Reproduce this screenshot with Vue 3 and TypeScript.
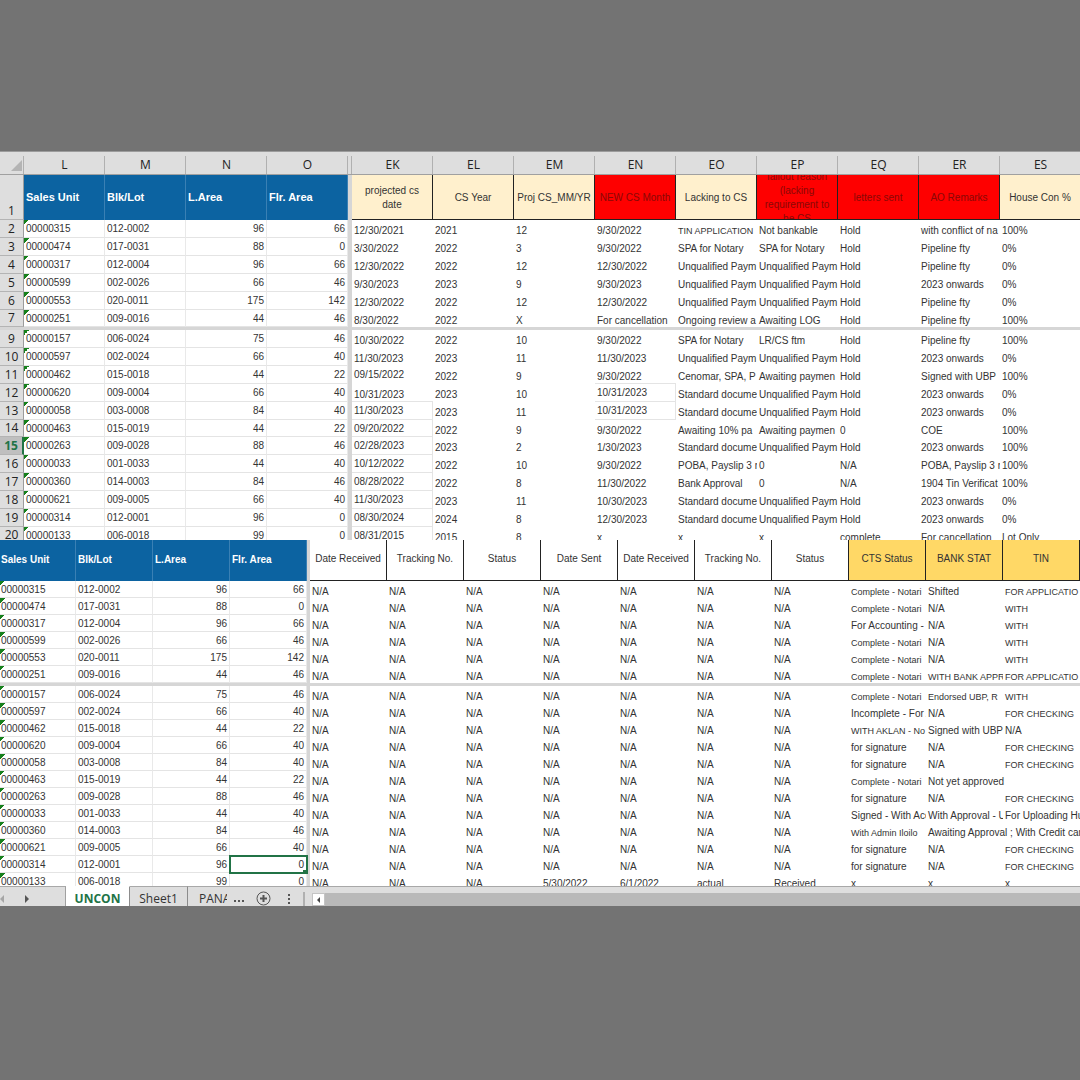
<script setup lang="ts">
interface Unit {
  row: number
  code: string
  lot: string
  land: number
  floor: number
}

interface Head {
  letter?: string
  label: string
  tone: string
}

const units: Unit[] = [
  { row: 2, code: '00000315', lot: '012-0002', land: 96, floor: 66 },
  { row: 3, code: '00000474', lot: '017-0031', land: 88, floor: 0 },
  { row: 4, code: '00000317', lot: '012-0004', land: 96, floor: 66 },
  { row: 5, code: '00000599', lot: '002-0026', land: 66, floor: 46 },
  { row: 6, code: '00000553', lot: '020-0011', land: 175, floor: 142 },
  { row: 7, code: '00000251', lot: '009-0016', land: 44, floor: 46 },
  { row: 9, code: '00000157', lot: '006-0024', land: 75, floor: 46 },
  { row: 10, code: '00000597', lot: '002-0024', land: 66, floor: 40 },
  { row: 11, code: '00000462', lot: '015-0018', land: 44, floor: 22 },
  { row: 12, code: '00000620', lot: '009-0004', land: 66, floor: 40 },
  { row: 13, code: '00000058', lot: '003-0008', land: 84, floor: 40 },
  { row: 14, code: '00000463', lot: '015-0019', land: 44, floor: 22 },
  { row: 15, code: '00000263', lot: '009-0028', land: 88, floor: 46 },
  { row: 16, code: '00000033', lot: '001-0033', land: 44, floor: 40 },
  { row: 17, code: '00000360', lot: '014-0003', land: 84, floor: 46 },
  { row: 18, code: '00000621', lot: '009-0005', land: 66, floor: 40 },
  { row: 19, code: '00000314', lot: '012-0001', land: 96, floor: 0 },
  { row: 20, code: '00000133', lot: '006-0018', land: 99, floor: 0 },
]

const unitHeads = [
  { letter: 'L', label: 'Sales Unit' },
  { letter: 'M', label: 'Blk/Lot' },
  { letter: 'N', label: 'L.Area' },
  { letter: 'O', label: 'Flr. Area' },
]

const csHeads: Head[] = [
  { letter: 'EK', label: 'projected cs\ndate', tone: 'cream' },
  { letter: 'EL', label: 'CS Year', tone: 'cream' },
  { letter: 'EM', label: 'Proj CS_MM/YR', tone: 'cream' },
  { letter: 'EN', label: 'NEW CS Month', tone: 'red' },
  { letter: 'EO', label: 'Lacking to CS', tone: 'cream' },
  { letter: 'EP', label: 'fallout reason\n(lacking\nrequirement to\nbe CS', tone: 'red' },
  { letter: 'EQ', label: 'letters sent', tone: 'red' },
  { letter: 'ER', label: 'AO Remarks', tone: 'red' },
  { letter: 'ES', label: 'House Con %', tone: 'cream' },
]

const UP = 'Unqualified Paym'
const SD = 'Standard docume'
const csRows: string[][] = [
  ['12/30/2021', '2021', '12', '9/30/2022', 'TIN APPLICATION', 'Not bankable', 'Hold', 'with conflict of na', '100%'],
  ['3/30/2022', '2022', '3', '9/30/2022', 'SPA for Notary', 'SPA for Notary', 'Hold', 'Pipeline fty', '0%'],
  ['12/30/2022', '2022', '12', '12/30/2022', UP, UP, 'Hold', 'Pipeline fty', '0%'],
  ['9/30/2023', '2023', '9', '9/30/2023', UP, UP, 'Hold', '2023 onwards', '0%'],
  ['12/30/2022', '2022', '12', '12/30/2022', UP, UP, 'Hold', 'Pipeline fty', '0%'],
  ['8/30/2022', '2022', 'X', 'For cancellation', 'Ongoing review a', 'Awaiting LOG', 'Hold', 'Pipeline fty', '100%'],
  ['10/30/2022', '2022', '10', '9/30/2022', 'SPA for Notary', 'LR/CS ftm', 'Hold', 'Pipeline fty', '100%'],
  ['11/30/2023', '2023', '11', '11/30/2023', UP, UP, 'Hold', '2023 onwards', '0%'],
  ['09/15/2022', '2022', '9', '9/30/2022', 'Cenomar, SPA, P', 'Awaiting paymen', 'Hold', 'Signed with UBP', '100%'],
  ['10/31/2023', '2023', '10', '10/31/2023', SD, UP, 'Hold', '2023 onwards', '0%'],
  ['11/30/2023', '2023', '11', '10/31/2023', SD, UP, 'Hold', '2023 onwards', '0%'],
  ['09/20/2022', '2022', '9', '9/30/2022', 'Awaiting 10% pa', 'Awaiting paymen', '0', 'COE', '100%'],
  ['02/28/2023', '2023', '2', '1/30/2023', SD, UP, 'Hold', '2023 onwards', '100%'],
  ['10/12/2022', '2022', '10', '9/30/2022', 'POBA, Payslip 3 m', '0', 'N/A', 'POBA, Payslip 3 m', '100%'],
  ['08/28/2022', '2022', '8', '11/30/2022', 'Bank Approval', '0', 'N/A', '1904 Tin Verificat', '100%'],
  ['11/30/2023', '2023', '11', '10/30/2023', SD, UP, 'Hold', '2023 onwards', '0%'],
  ['08/30/2024', '2024', '8', '12/30/2023', SD, UP, 'Hold', '2023 onwards', '0%'],
  ['08/31/2015', '2015', '8', 'x', 'x', 'x', 'complete', 'For cancellation', 'Lot Only'],
]

const docHeads: Head[] = [
  { label: 'Date Received', tone: 'plain' },
  { label: 'Tracking No.', tone: 'plain' },
  { label: 'Status', tone: 'plain' },
  { label: 'Date Sent', tone: 'plain' },
  { label: 'Date Received', tone: 'plain' },
  { label: 'Tracking No.', tone: 'plain' },
  { label: 'Status', tone: 'plain' },
  { label: 'CTS Status', tone: 'gold' },
  { label: 'BANK STAT', tone: 'gold' },
  { label: 'TIN', tone: 'gold' },
]

const CN = 'Complete - Notari'
const FC = 'FOR CHECKING'
const FS = 'for signature'
const FA = 'FOR APPLICATIO'
const statuses: string[][] = [
  [CN, 'Shifted', FA],
  [CN, 'N/A', 'WITH'],
  ['For Accounting -', 'N/A', 'WITH'],
  [CN, 'N/A', 'WITH'],
  [CN, 'N/A', 'WITH'],
  [CN, 'WITH BANK APPR', FA],
  [CN, 'Endorsed UBP, R', 'WITH'],
  ['Incomplete - For A', 'N/A', FC],
  ['WITH AKLAN - No', 'Signed with UBP', 'N/A'],
  [FS, 'N/A', FC],
  [FS, 'N/A', FC],
  [CN, 'Not yet approved', ''],
  [FS, 'N/A', FC],
  ['Signed - With Acc', 'With Approval - U', 'For Uploading Hus'],
  ['With Admin Iloilo', 'Awaiting Approval ; With Credit card', ''],
  [FS, 'N/A', FC],
  [FS, 'N/A', FC],
  ['x', 'x', 'x'],
]

const docRows: string[][] = statuses.map((tail, i) => {
  const last = i === statuses.length - 1
  const lead = last
    ? ['N/A', 'N/A', 'N/A', '5/30/2022', '6/1/2022', 'actual', 'Received']
    : Array.from({ length: 7 }, () => 'N/A')
  return [...lead, ...tail]
})

// The frozen pane ends after sheet row 7; row 8 is hidden.
const groups = [units.slice(0, 6), units.slice(6)]
const indexOf = (g: number, i: number) => g * 6 + i

const compact = (text: string) =>
  /^(TIN A|FOR |WITH|Complete|Endorsed|With Admin)/.test(text)

function csClass(row: number, col: number, text: string) {
  const ek = col === 0
  const en = col === 3 && (row === 12 || row === 13)
  return {
    compact: compact(text),
    raised: (ek && (row === 11 || row >= 13)) || en,
    lined: (ek && row >= 12) || en || (col === 3 && row === 11),
    edged: (ek && row >= 13) || en,
  }
}

function docClass(cells: string[], col: number) {
  return { compact: compact(cells[col]), spill: cells[col + 1] === '' }
}
</script>

<template>
  <main class="page">
    <section class="pane upper" aria-label="Construction status sheet">
      <table class="sheet">
        <colgroup>
          <col class="c-num" />
          <col v-for="h in unitHeads" :key="h.letter" />
          <col class="c-freeze" />
          <col v-for="h in csHeads" :key="h.letter" />
        </colgroup>
        <thead>
          <tr class="letters">
            <td class="corner">
              <svg width="11" height="11" viewBox="0 0 11 11" aria-hidden="true">
                <path d="M11 0V11H0Z" fill="#b4b4b4" />
              </svg>
            </td>
            <th v-for="h in unitHeads" :key="h.letter" scope="col">{{ h.letter }}</th>
            <td class="split"></td>
            <th v-for="h in csHeads" :key="h.letter" scope="col">{{ h.letter }}</th>
          </tr>
          <tr class="heads">
            <th scope="row" class="num">1</th>
            <th v-for="h in unitHeads" :key="h.letter" scope="col" class="blue">{{ h.label }}</th>
            <td class="freeze"></td>
            <th v-for="h in csHeads" :key="h.letter" scope="col" class="head" :class="h.tone">
              <div class="wrap">{{ h.label }}</div>
            </th>
          </tr>
        </thead>
        <template v-for="(group, g) in groups" :key="g">
          <tbody v-if="g === 1">
            <tr class="bar"><td colspan="15"></td></tr>
          </tbody>
          <tbody class="body">
            <tr v-for="(u, i) in group" :key="u.row">
              <th scope="row" class="num" :class="{ current: u.row === 15 }">{{ u.row }}</th>
              <td class="grid flag">{{ u.code }}</td>
              <td class="grid">{{ u.lot }}</td>
              <td class="grid right">{{ u.land }}</td>
              <td class="grid right">{{ u.floor }}</td>
              <td class="freeze"></td>
              <td
                v-for="(text, c) in csRows[indexOf(g, i)]"
                :key="c"
                class="free"
                :class="csClass(u.row, c, text)"
              >{{ text }}</td>
            </tr>
          </tbody>
        </template>
      </table>
    </section>

    <section class="pane lower" aria-label="Document status sheet">
      <table class="sheet">
        <colgroup>
          <col class="c-first" />
          <col span="3" />
          <col class="c-split" />
          <col span="10" />
        </colgroup>
        <thead>
          <tr class="heads">
            <th v-for="h in unitHeads" :key="h.letter" scope="col" class="blue">{{ h.label }}</th>
            <td class="freeze"></td>
            <th v-for="(h, i) in docHeads" :key="i" scope="col" class="head" :class="h.tone">
              {{ h.label }}
            </th>
          </tr>
        </thead>
        <template v-for="(group, g) in groups" :key="g">
          <tbody v-if="g === 1">
            <tr class="bar"><td colspan="15"></td></tr>
          </tbody>
          <tbody class="body">
            <tr v-for="(u, i) in group" :key="u.row">
              <td class="grid flag">{{ u.code }}</td>
              <td class="grid">{{ u.lot }}</td>
              <td class="grid right">{{ u.land }}</td>
              <td class="grid right" :class="{ selected: u.row === 19 }">{{ u.floor }}</td>
              <td class="freeze"></td>
              <td
                v-for="(text, c) in docRows[indexOf(g, i)]"
                :key="c"
                class="free"
                :class="docClass(docRows[indexOf(g, i)], c)"
              >{{ text }}</td>
            </tr>
          </tbody>
        </template>
      </table>
    </section>

    <footer class="tabs">
      <div class="nav">
        <button type="button" aria-label="Previous sheet">
          <svg width="5" height="8" viewBox="0 0 5 8"><path d="M4 0V8L0 4Z" fill="#a6a6a6" /></svg>
        </button>
        <button type="button" aria-label="Next sheet">
          <svg width="5" height="8" viewBox="0 0 5 8"><path d="M0 0V8L4 4Z" fill="#555" /></svg>
        </button>
      </div>
      <button type="button" class="tab active">UNCON</button>
      <button type="button" class="tab">Sheet1</button>
      <button type="button" class="tab cut"><span>PANA</span></button>
      <button type="button" class="more" aria-label="More sheets">
        <svg width="12" height="14" viewBox="0 0 12 14">
          <path d="M1 10h2v2H1zM5 10h2v2H5zM9 10h2v2H9z" fill="#555" />
        </svg>
      </button>
      <button type="button" class="add" aria-label="New sheet">
        <svg width="15" height="15" viewBox="0 0 30 30" fill="none" stroke="#555">
          <circle cx="15" cy="15" r="13" stroke-width="2" />
          <path d="M15 8V22M8 15H22" stroke-width="4" />
        </svg>
      </button>
      <div class="grip">
        <svg width="3" height="12" viewBox="0 0 3 12" aria-hidden="true">
          <path d="M0 1h2v2H0zM0 5h2v2H0zM0 9h2v2H0z" fill="#555" />
        </svg>
        <i></i>
      </div>
      <div class="scroll">
        <button type="button" aria-label="Scroll left">
          <svg width="5" height="6" viewBox="0 0 5 6"><path d="M4 0V6L1 3Z" fill="#444" /></svg>
        </button>
        <div class="thumb"></div>
      </div>
    </footer>
  </main>
</template>

<style>
body {
  background: #737373;
}
</style>

<style scoped>
* {
  box-sizing: border-box;
}

.page {
  min-height: 100vh;
  padding-top: 151px;
  background: #737373;
  color: #333;
  font-family: "Liberation Sans", Arial, sans-serif;
  font-size: 10px;
  line-height: 12px;
}

.pane {
  overflow: hidden;
  background: #fff;
}

.upper {
  height: 389px;
}

.lower {
  height: 346px;
}

.sheet {
  width: 100%;
  table-layout: fixed;
  border-collapse: separate;
  border-spacing: 0;
}

/* The last column runs just past the pane's edge. */
.upper .sheet {
  width: calc(100% + 1px);
}

.c-num {
  width: 24px;
}

.c-freeze {
  width: 4px;
}

.c-first {
  width: 76px;
}

.c-split {
  width: 3px;
}

th,
td {
  padding: 0;
  font-weight: 400;
  overflow: hidden;
  white-space: nowrap;
}

.letters > * {
  height: 24px;
  padding-top: 5px;
  border-top: 1px solid #9c9c9c;
  border-bottom: 1px solid #a0a0a0;
  background: linear-gradient(#b0b0b0, #b0b0b0) no-repeat right bottom / 1px 18px #dedede;
  color: #222;
  font: 12px/16px "Open Sans", "Noto Sans", sans-serif;
  vertical-align: top;
}

.letters .corner {
  padding: 8px 2px 0 0;
  text-align: right;
}

.letters .corner svg {
  display: block;
  margin-left: auto;
}

.num {
  border-right: 1px solid #9c9c9c;
  border-bottom: 1px solid #b4b4b4;
  background: #dedede;
  color: #222;
  font: 12px/16px "Open Sans", "Noto Sans", sans-serif;
  text-align: center;
  vertical-align: bottom;
}

.current {
  border-right: 2px solid #217346;
  background: #bfbfbf;
  color: #217346;
  font-weight: 700;
}

.upper .heads > * {
  height: 45px;
}

.lower .heads > * {
  height: 41px;
}

.blue {
  padding: 0 0 2px 2px;
  border-right: 1px solid #3a80b4;
  background: #0c63a1;
  color: #fff;
  font-weight: 700;
  text-align: left;
}

.upper .blue {
  font-size: 11px;
}

.lower .blue:first-child,
.lower .flag {
  padding-left: 1px;
}

.head {
  border-right: 1px solid #222;
  border-bottom: 1px solid #222;
  text-align: center;
}

.lower .head {
  padding-bottom: 2px;
}

.wrap {
  display: flex;
  align-items: center;
  justify-content: center;
  height: 44px;
  padding-top: 1px;
  overflow: hidden;
  line-height: 14px;
  white-space: pre-line;
}

.cream {
  background: #fff0cd;
}

.red {
  background: #fe0000;
  color: #8a0806;
}

.gold {
  background: #ffd866;
}

.freeze,
.bar td {
  background: #d6d6d6;
}

.bar td {
  height: 3px;
}

.upper .body tr > * {
  height: 18px;
}

.upper .body tr:nth-child(6n) > * {
  height: 17px;
}

.lower .body tr > * {
  height: 17px;
}

.body td {
  vertical-align: top;
}

.grid {
  padding: 3px 2px 0;
  border-right: 1px solid #e9e9e9;
  border-bottom: 1px solid #e4e4e4;
}

.flag {
  background: linear-gradient(135deg, #16801c 50%, transparent 50%) no-repeat 0 0 / 5px 5px;
}

.right {
  text-align: right;
}

.free {
  padding: 5px 0 0 2px;
}

.compact {
  font-size: 9px;
}

.free.raised {
  padding-top: 3px;
}

.lined {
  border-bottom: 1px solid #e4e4e4;
}

.edged {
  border-right: 1px solid #e4e4e4;
}

.spill {
  overflow: visible;
}

.selected {
  position: relative;
  overflow: visible;
  outline: 2px solid #217346;
  outline-offset: -1px;
}

.selected::after {
  content: "";
  position: absolute;
  right: -1px;
  bottom: -2px;
  width: 4px;
  height: 4px;
  background: #217346;
}

.tabs {
  display: flex;
  height: 20px;
  background: #dedede;
  font: 12px/16px "Open Sans", "Noto Sans", sans-serif;
}

.tabs > * {
  border-top: 1px solid #a8a8a8;
}

button {
  display: flex;
  align-items: center;
  justify-content: center;
  padding: 0;
  border: 0;
  background: none;
  color: #333;
  font: inherit;
}

.nav {
  display: flex;
  align-items: center;
  gap: 20px;
  width: 66px;
  padding-top: 4px;
  border-right: 1px solid #a0a0a0;
}

.tab {
  width: 58px;
  padding-top: 4px;
  border-right: 1px solid #8c8c8c;
}

.tab.active {
  width: 64px;
  border-top-color: #fff;
  background: #fff;
  color: #217346;
  font-weight: 700;
}

.tab.cut {
  width: 40px;
  padding-left: 11px;
  border-right: 0;
  justify-content: flex-start;
}

.cut span {
  width: 28px;
  overflow: hidden;
}

.more {
  width: 20px;
  padding-left: 2px;
}

.add {
  width: 30px;
  padding-top: 4px;
}

.grip {
  display: flex;
  align-items: center;
  justify-content: space-between;
  width: 33px;
  padding: 5px 6px 0 10px;
}

.grip i {
  width: 2px;
  height: 14px;
  background: #b0b0b0;
}

.scroll {
  display: flex;
  flex: 1;
  padding: 6px 0 0 1px;
}

.scroll button {
  width: 13px;
  border: 1px solid #c4c4c4;
  background: #fff;
}

.thumb {
  flex: 1;
  background: #b9b9b9;
}
</style>
